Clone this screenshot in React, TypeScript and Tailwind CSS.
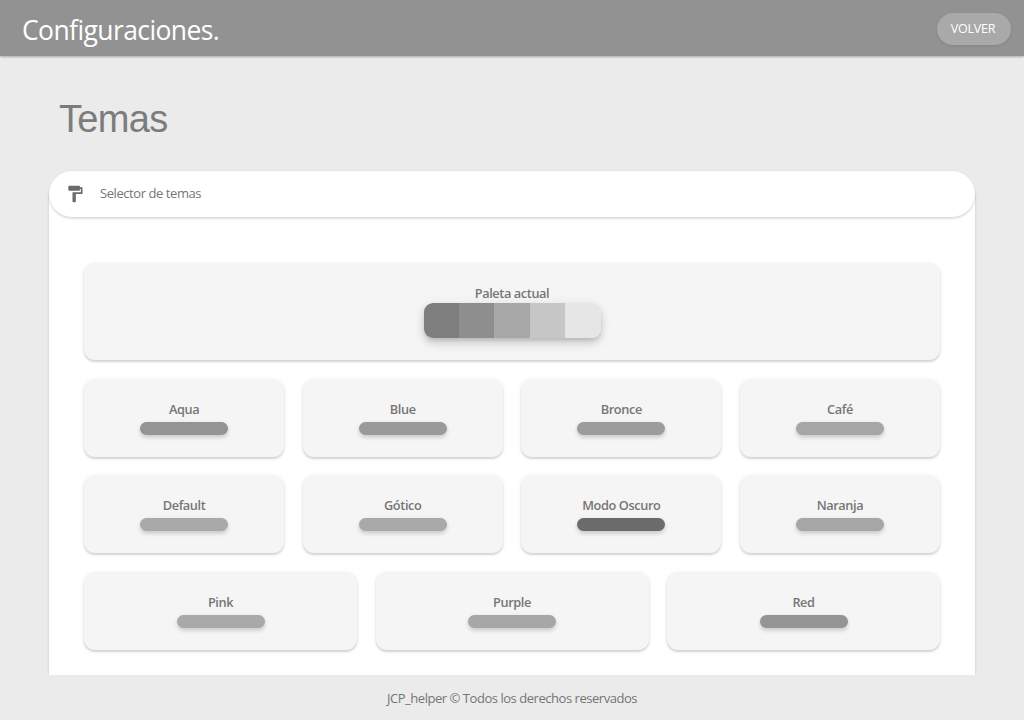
import { MdFormatPaint } from "react-icons/md";

const palette = ["bg-[#7e7e7e]", "bg-[#8e8e8e]", "bg-[#a8a8a8]", "bg-[#c6c6c6]", "bg-[#e6e6e6]"];

const rows = [
  [
    { name: "Aqua", color: "bg-[#949494]" },
    { name: "Blue", color: "bg-[#9a9a9a]" },
    { name: "Bronce", color: "bg-[#9c9c9c]" },
    { name: "Café", color: "bg-[#a6a6a6]" },
  ],
  [
    { name: "Default", color: "bg-[#a9a9a9]" },
    { name: "Gótico", color: "bg-[#a9a9a9]" },
    { name: "Modo Oscuro", color: "bg-[#6b6b6b]" },
    { name: "Naranja", color: "bg-[#a6a6a6]" },
  ],
  [
    { name: "Pink", color: "bg-[#a9a9a9]" },
    { name: "Purple", color: "bg-[#a6a6a6]" },
    { name: "Red", color: "bg-[#949494]" },
  ],
];

const card =
  "flex flex-col items-center rounded-[11px] bg-[#f5f5f5] shadow-[0_2px_2px_0_rgba(0,0,0,0.12),0_1px_4px_0_rgba(0,0,0,0.09)]";

const label = "text-[12.75px] leading-5 font-semibold tracking-[-0.4px]";

export default function App() {
  return (
    <div className="flex h-[720px] w-[1024px] flex-col overflow-hidden bg-[#ebebeb] font-['Open_Sans','Noto_Sans',sans-serif] text-[#757575]">
      <header className="z-10 flex h-14 shrink-0 items-center justify-between bg-[#929292] pr-[13px] pl-[22px] text-white shadow-[0_1px_2px_rgba(0,0,0,0.28)]">
        <h1 className="pt-[4px] pb-px text-[26.5px] leading-9 tracking-[-0.6px]">Configuraciones.</h1>
        <button className="mt-px h-8 w-[74px] rounded-full bg-[#a9a9a9] pt-[2px] pr-[2px] text-[12.5px] tracking-[-0.2px] shadow-[0_1px_3px_rgba(0,0,0,0.1)]">
          VOLVER
        </button>
      </header>

      <h2 className="mt-[41px] ml-[59px] h-[74px] font-['Liberation_Sans',Arial,sans-serif] text-[38px] leading-[44px] tracking-[-0.65px] text-[#7c7c7c]">
        Temas
      </h2>

      <main className="mx-[49px] flex h-[504px] flex-col">
        <div className="z-10 flex h-[46px] shrink-0 items-center rounded-full bg-white pb-px pl-4 shadow-[0_2px_2px_rgba(0,0,0,0.12),0_0_2px_rgba(0,0,0,0.07)]">
          <MdFormatPaint className="h-5 w-5 text-[#6b6b6b]" />
          <span className="ml-[15px] pb-px text-[13px] leading-5 tracking-[-0.43px]">Selector de temas</span>
        </div>
        <section className="-mt-[23px] flex min-h-0 grow flex-col gap-[18.5px] bg-white px-[35px] pt-[69px] shadow-[0_1px_3px_rgba(0,0,0,0.14)]">
          <div className={`${card} h-[97px] shrink-0 pt-5`}>
            <span className={`${label} h-5`}>Paleta actual</span>
            <div className="flex h-[35px] w-[177px] overflow-hidden rounded-[9px] shadow-[0_6px_10px_rgba(0,0,0,0.12),0_1px_14px_rgba(0,0,0,0.06),0_3px_5px_-1px_rgba(0,0,0,0.14)]">
              {palette.map((color) => (
                <div key={color} className={`${color} grow`} />
              ))}
            </div>
          </div>
          {rows.map((row, index) => (
            <div key={index} className="flex h-[78px] shrink-0 gap-[18.5px]">
              {row.map((theme) => (
                <div key={theme.name} className={`${card} flex-1 pt-5`}>
                  <span className={`${label} h-[23px]`}>{theme.name}</span>
                  <div
                    className={`${theme.color} h-[13px] w-[88px] rounded-full shadow-[0_3px_4px_rgba(0,0,0,0.12),0_1px_4px_rgba(0,0,0,0.08)]`}
                  />
                </div>
              ))}
            </div>
          ))}
        </section>
      </main>

      <footer className="z-20 flex h-[45px] shrink-0 items-center justify-center bg-[#ebebeb] pt-[2px] text-[13px] tracking-[-0.46px]">
        JCP_helper © Todos los derechos reservados
      </footer>
    </div>
  );
}
